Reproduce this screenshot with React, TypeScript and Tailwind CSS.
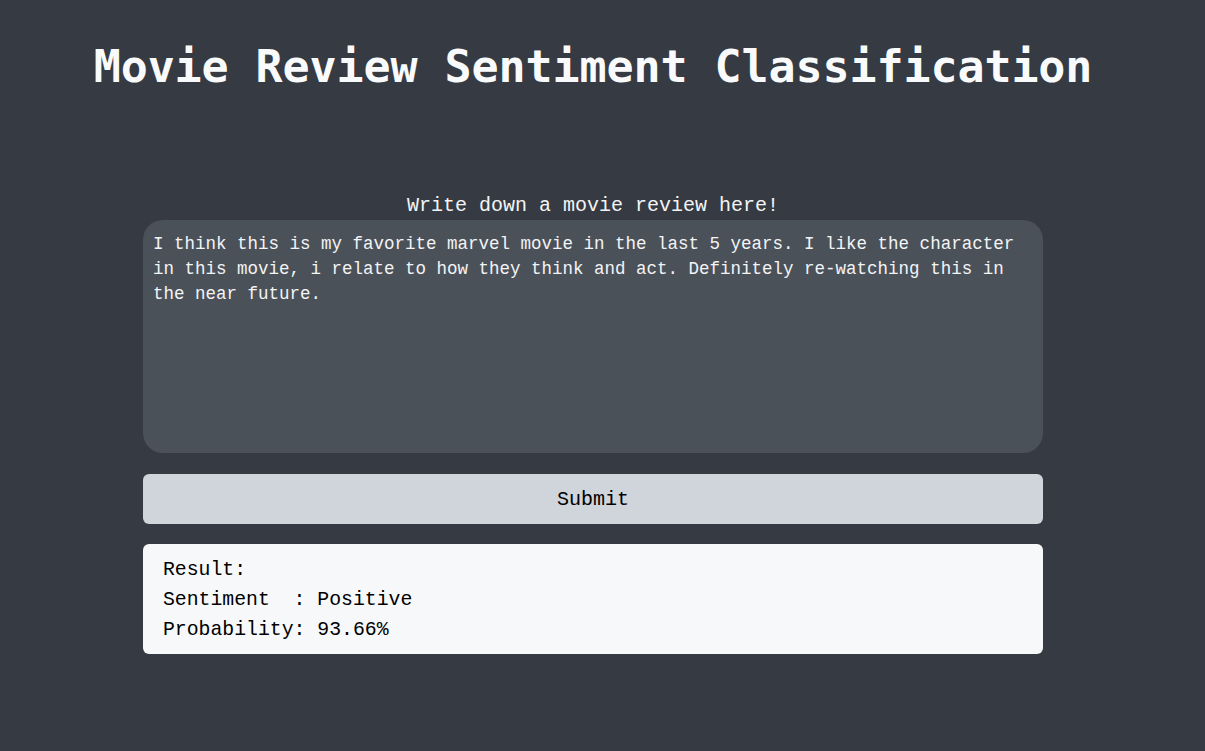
import { useState } from "react"

// Single-page sentiment classifier mockup

const REVIEW =
  "I think this is my favorite marvel movie in the last 5 years. I like the character in this movie, i relate to how they think and act. Definitely re-watching this in the near future."

export default function App() {
  const [review, setReview] = useState(REVIEW)

  return (
    <div className="min-h-screen w-full bg-[#363a42]">
      <div className="w-[1186px] flex flex-col items-center">
        {/* Header */}
        <h1 className="mt-[44px] text-[45px] leading-[45px] font-bold tracking-[-0.1px] text-[#f9fafb] font-['DejaVu_Sans_Mono',monospace]">
          Movie Review Sentiment Classification
        </h1>

        {/* Form */}
        <div className="mt-[103px] w-[900px] flex flex-col font-['Liberation_Mono',monospace]">
          <label className="pt-[2px] text-center text-[20px] leading-[24px] text-[#f3f4f6]">
            Write down a movie review here!
          </label>
          <textarea
            value={review}
            onChange={(e) => setReview(e.target.value)}
            className="mt-[2px] h-[233px] w-full resize-none rounded-[20px] bg-[#4b5159] px-[10px] pt-[12px] pb-[8px] text-[17.5px] leading-[25px] text-[#f3f4f6] outline-none font-['Liberation_Mono',monospace]"
          />

          <button className="mt-[21px] h-[50px] w-full rounded-[6px] bg-[#d0d4db] pt-[2px] text-[20px] text-black">
            Submit
          </button>

          {/* Result */}
          <div className="mt-[20px] rounded-[6px] bg-[#f7f8fa] px-5 pt-[11px] pb-[9px] text-[19.8px] leading-[30px] text-black whitespace-pre">
            <div>Result:</div>
            <div>Sentiment  : Positive</div>
            <div>Probability: 93.66%</div>
          </div>
        </div>
      </div>
    </div>
  )
}
